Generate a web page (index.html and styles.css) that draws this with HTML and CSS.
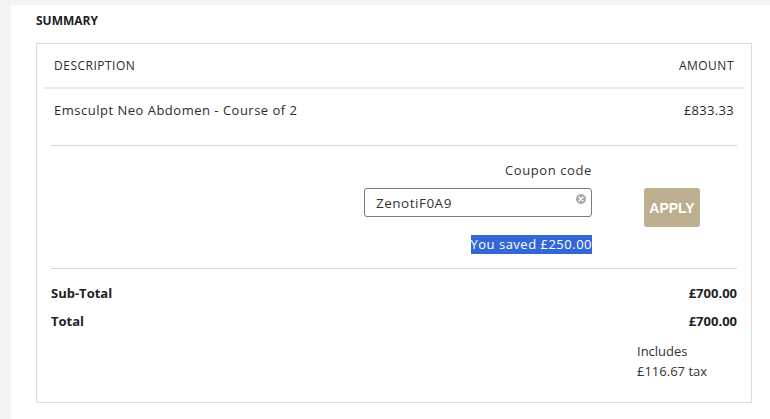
FILE: index.html
```html
<!DOCTYPE html>
<html lang="en">
<head>
<meta charset="utf-8">
<title>Summary</title>
<link rel="stylesheet" href="styles.css">
</head>
<body>
<div class="page">
  <h2 class="title">SUMMARY</h2>
  <div class="box">
    <div class="row head">
      <span>DESCRIPTION</span>
      <span>AMOUNT</span>
    </div>
    <div class="row item">
      <span class="wide">Emsculpt Neo Abdomen - Course of 2</span>
      <span>£833.33</span>
    </div>
    <div class="coupon">
      <div class="coupon-col">
        <label class="coupon-label" for="code">Coupon code</label>
        <div class="input-wrap">
          <input id="code" class="coupon-input" type="text" value="ZenotiF0A9">
          <span class="clear"><svg width="10" height="10" viewBox="0 0 10 10"><circle cx="5" cy="5" r="5" fill="#a9a9a9"/><path d="M3.2 3.2L6.8 6.8M6.8 3.2L3.2 6.8" stroke="#fff" stroke-width="1.5" stroke-linecap="round"/></svg></span>
        </div>
        <div class="saved"><span class="sel">You saved £250.00</span></div>
      </div>
      <button class="apply" type="button">APPLY</button>
    </div>
    <div class="totals">
      <div class="trow"><span>Sub-Total</span><span>£700.00</span></div>
      <div class="trow"><span>Total</span><span>£700.00</span></div>
      <div class="tax">Includes<br>£116.67 tax</div>
    </div>
  </div>
</div>
</body>
</html>
```

FILE: styles.css
```css
html, body {
  margin: 0;
  padding: 0;
}
body {
  background: #f4f4f4;
  font-family: "Open Sans", "Noto Sans", sans-serif;
  color: #2b2b2b;
  height: 419px;
  overflow: hidden;
}
.page {
  margin: 5px 0 0 11px;
  background: #fff;
  height: 414px;
  padding: 8px 18px 0 25px;
  box-sizing: border-box;
}
.title {
  margin: 0;
  font-size: 12px;
  font-weight: 700;
  line-height: 16px;
  color: #222;
  height: 30px;
}
.box {
  border: 1px solid #dcdcdc;
  width: 716px;
  height: 360px;
  box-sizing: border-box;
  padding: 0 7px;
}
.row {
  display: flex;
  justify-content: space-between;
  align-items: center;
  padding: 0 10px;
  font-size: 12px;
  letter-spacing: 0.5px;
}
.head {
  height: 43px;
  border-bottom: 2px solid #ececec;
}
.item {
  height: 42px;
  font-size: 13px;
  letter-spacing: 0.3px;
}
.item .wide {
  letter-spacing: 0.5px;
}
.coupon {
  margin: 14px 7px 0 7px;
  border-top: 1px solid #d6d6d6;
  border-bottom: 1px solid #d6d6d6;
  display: flex;
  justify-content: flex-end;
  align-items: flex-start;
  padding: 14px 37px 14px 0;
  gap: 52px;
}
.coupon-col {
  display: flex;
  flex-direction: column;
  align-items: flex-end;
}
.coupon-label {
  font-size: 13px;
  line-height: 20px;
  color: #333;
  letter-spacing: 0.6px;
}
.input-wrap {
  position: relative;
  margin-top: 8px;
}
.coupon-input {
  width: 228px;
  height: 29px;
  box-sizing: border-box;
  border: 1px solid #7a7a7a;
  border-radius: 3px;
  padding: 0 28px 0 11px;
  font-family: "Open Sans", "Noto Sans", sans-serif;
  font-size: 13.5px;
  letter-spacing: 0.5px;
  color: #333;
  outline: none;
}
.clear {
  position: absolute;
  right: 6px;
  top: 6px;
  width: 10px;
  height: 10px;
  display: block;
}
.clear svg { display: block; }
.saved {
  margin-top: 18px;
  font-size: 13px;
  line-height: 19px;
  letter-spacing: 0.5px;
}
.sel {
  background: #3367d6;
  color: #fff;
  display: inline-block;
}
.apply {
  margin-top: 28px;
  width: 56px;
  height: 39px;
  border: none;
  border-radius: 3px;
  background: #bcae8e;
  color: #fff;
  font-family: "Liberation Sans", Arial, sans-serif;
  font-weight: 700;
  font-size: 14px;
  padding: 0;
}
.totals {
  padding: 14px 7px 0 7px;
}
.trow {
  display: flex;
  justify-content: space-between;
  font-size: 13px;
  font-weight: 700;
  line-height: 20px;
  margin-bottom: 8px;
  color: #222;
}
.tax {
  margin-left: auto;
  width: 100px;
  font-size: 13px;
  line-height: 20px;
  color: #333;
  padding-top: 2px;
}
```
